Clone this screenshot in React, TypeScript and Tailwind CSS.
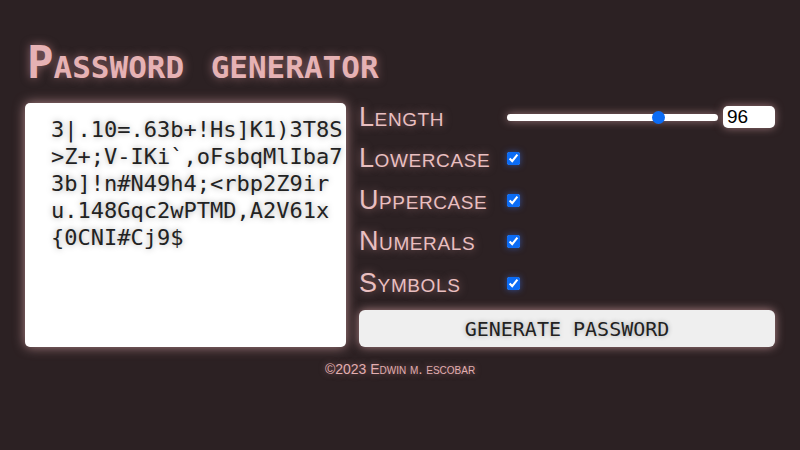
import { useState } from 'react';

const PASSWORD_LINES = [
  '3|.10=.63b+!Hs]K1)3T8S',
  '>Z+;V-IKi`,oFsbqMlIba7',
  '3b]!n#N49h4;<rbp2Z9ir',
  'u.148Gqc2wPTMD,A2V61x',
  '{0CNI#Cj9$',
];

const OPTIONS = ['Lowercase', 'Uppercase', 'Numerals', 'Symbols'];

const labelClass =
  "font-['Liberation_Sans',Arial,sans-serif] text-[27px] leading-none [font-variant:small-caps] tracking-[0.6px] text-[#e9bfc0] [text-shadow:0_0_8px_rgba(232,170,172,0.55)]";

export default function App() {
  const [length, setLength] = useState(96);

  return (
    <div className="w-[800px] h-[450px] bg-[#2c2123] px-[25px] pt-[40px] overflow-hidden">
      <h1 className="font-['DejaVu_Sans_Mono',monospace] text-[44px] leading-[46px] font-bold [font-variant:small-caps] text-[#e6b2b4] [text-shadow:0_0_10px_rgba(230,160,165,0.55)] pl-[2px] h-[46px]">
        Password generator
      </h1>

      <div className="mt-[17px] flex gap-[13px]">
        <div className="w-[321px] h-[244px] bg-white rounded-[5px] shadow-[0_0_12px_rgba(232,175,178,0.7)] pl-[26px] pt-[13px]">
          {PASSWORD_LINES.map((line) => (
            <div
              key={line}
              className="font-['DejaVu_Sans_Mono',monospace] text-[22px] leading-[27px] text-[#222] whitespace-pre [text-shadow:0_0_6px_rgba(0,0,0,0.35)]"
            >
              {line}
            </div>
          ))}
        </div>

        <div className="w-[416px] flex flex-col">
          <div className="flex items-center h-[28px]">
            <span className={`w-[148px] ${labelClass}`}>Length</span>
            <input
              type="range"
              min={8}
              max={128}
              value={length}
              onChange={(e) => setLength(Number(e.target.value))}
              className="w-[211px] h-[7px] appearance-none bg-white rounded-full shadow-[0_0_8px_rgba(232,175,178,0.6)] [&::-webkit-slider-thumb]:appearance-none [&::-webkit-slider-thumb]:w-[13px] [&::-webkit-slider-thumb]:h-[13px] [&::-webkit-slider-thumb]:rounded-full [&::-webkit-slider-thumb]:bg-[#0b6cf5]"
            />
            <input
              type="text"
              value={length}
              readOnly
              className="ml-[5px] w-[52px] h-[22px] bg-white rounded-[5px] px-[4px] font-['Liberation_Sans',Arial,sans-serif] text-[19px] leading-none text-black outline-none shadow-[0_0_8px_rgba(232,175,178,0.6)]"
            />
          </div>

          {OPTIONS.map((name) => (
            <div key={name} className="flex items-center h-[28px] mt-[13.5px]">
              <span className={`w-[148px] ${labelClass}`}>{name}</span>
              <input
                type="checkbox"
                defaultChecked
                className="w-[13px] h-[13px] m-0 accent-[#0b6cf5] shadow-[0_0_6px_rgba(60,120,255,0.5)]"
              />
            </div>
          ))}

          <button className="mt-[13px] h-[37px] w-full bg-[#efefef] rounded-[6px] shadow-[0_0_10px_rgba(232,175,178,0.7)] font-['DejaVu_Sans_Mono',monospace] text-[20px] text-[#222] [text-shadow:0_0_5px_rgba(0,0,0,0.3)]">
            GENERATE PASSWORD
          </button>
        </div>
      </div>

      <p className="mt-[12px] text-center font-['Liberation_Sans',Arial,sans-serif] text-[14px] [font-variant:small-caps] text-[#e2aeb0] [text-shadow:0_0_6px_rgba(230,160,165,0.5)]">
        ©2023 Edwin m. escobar
      </p>
    </div>
  );
}
